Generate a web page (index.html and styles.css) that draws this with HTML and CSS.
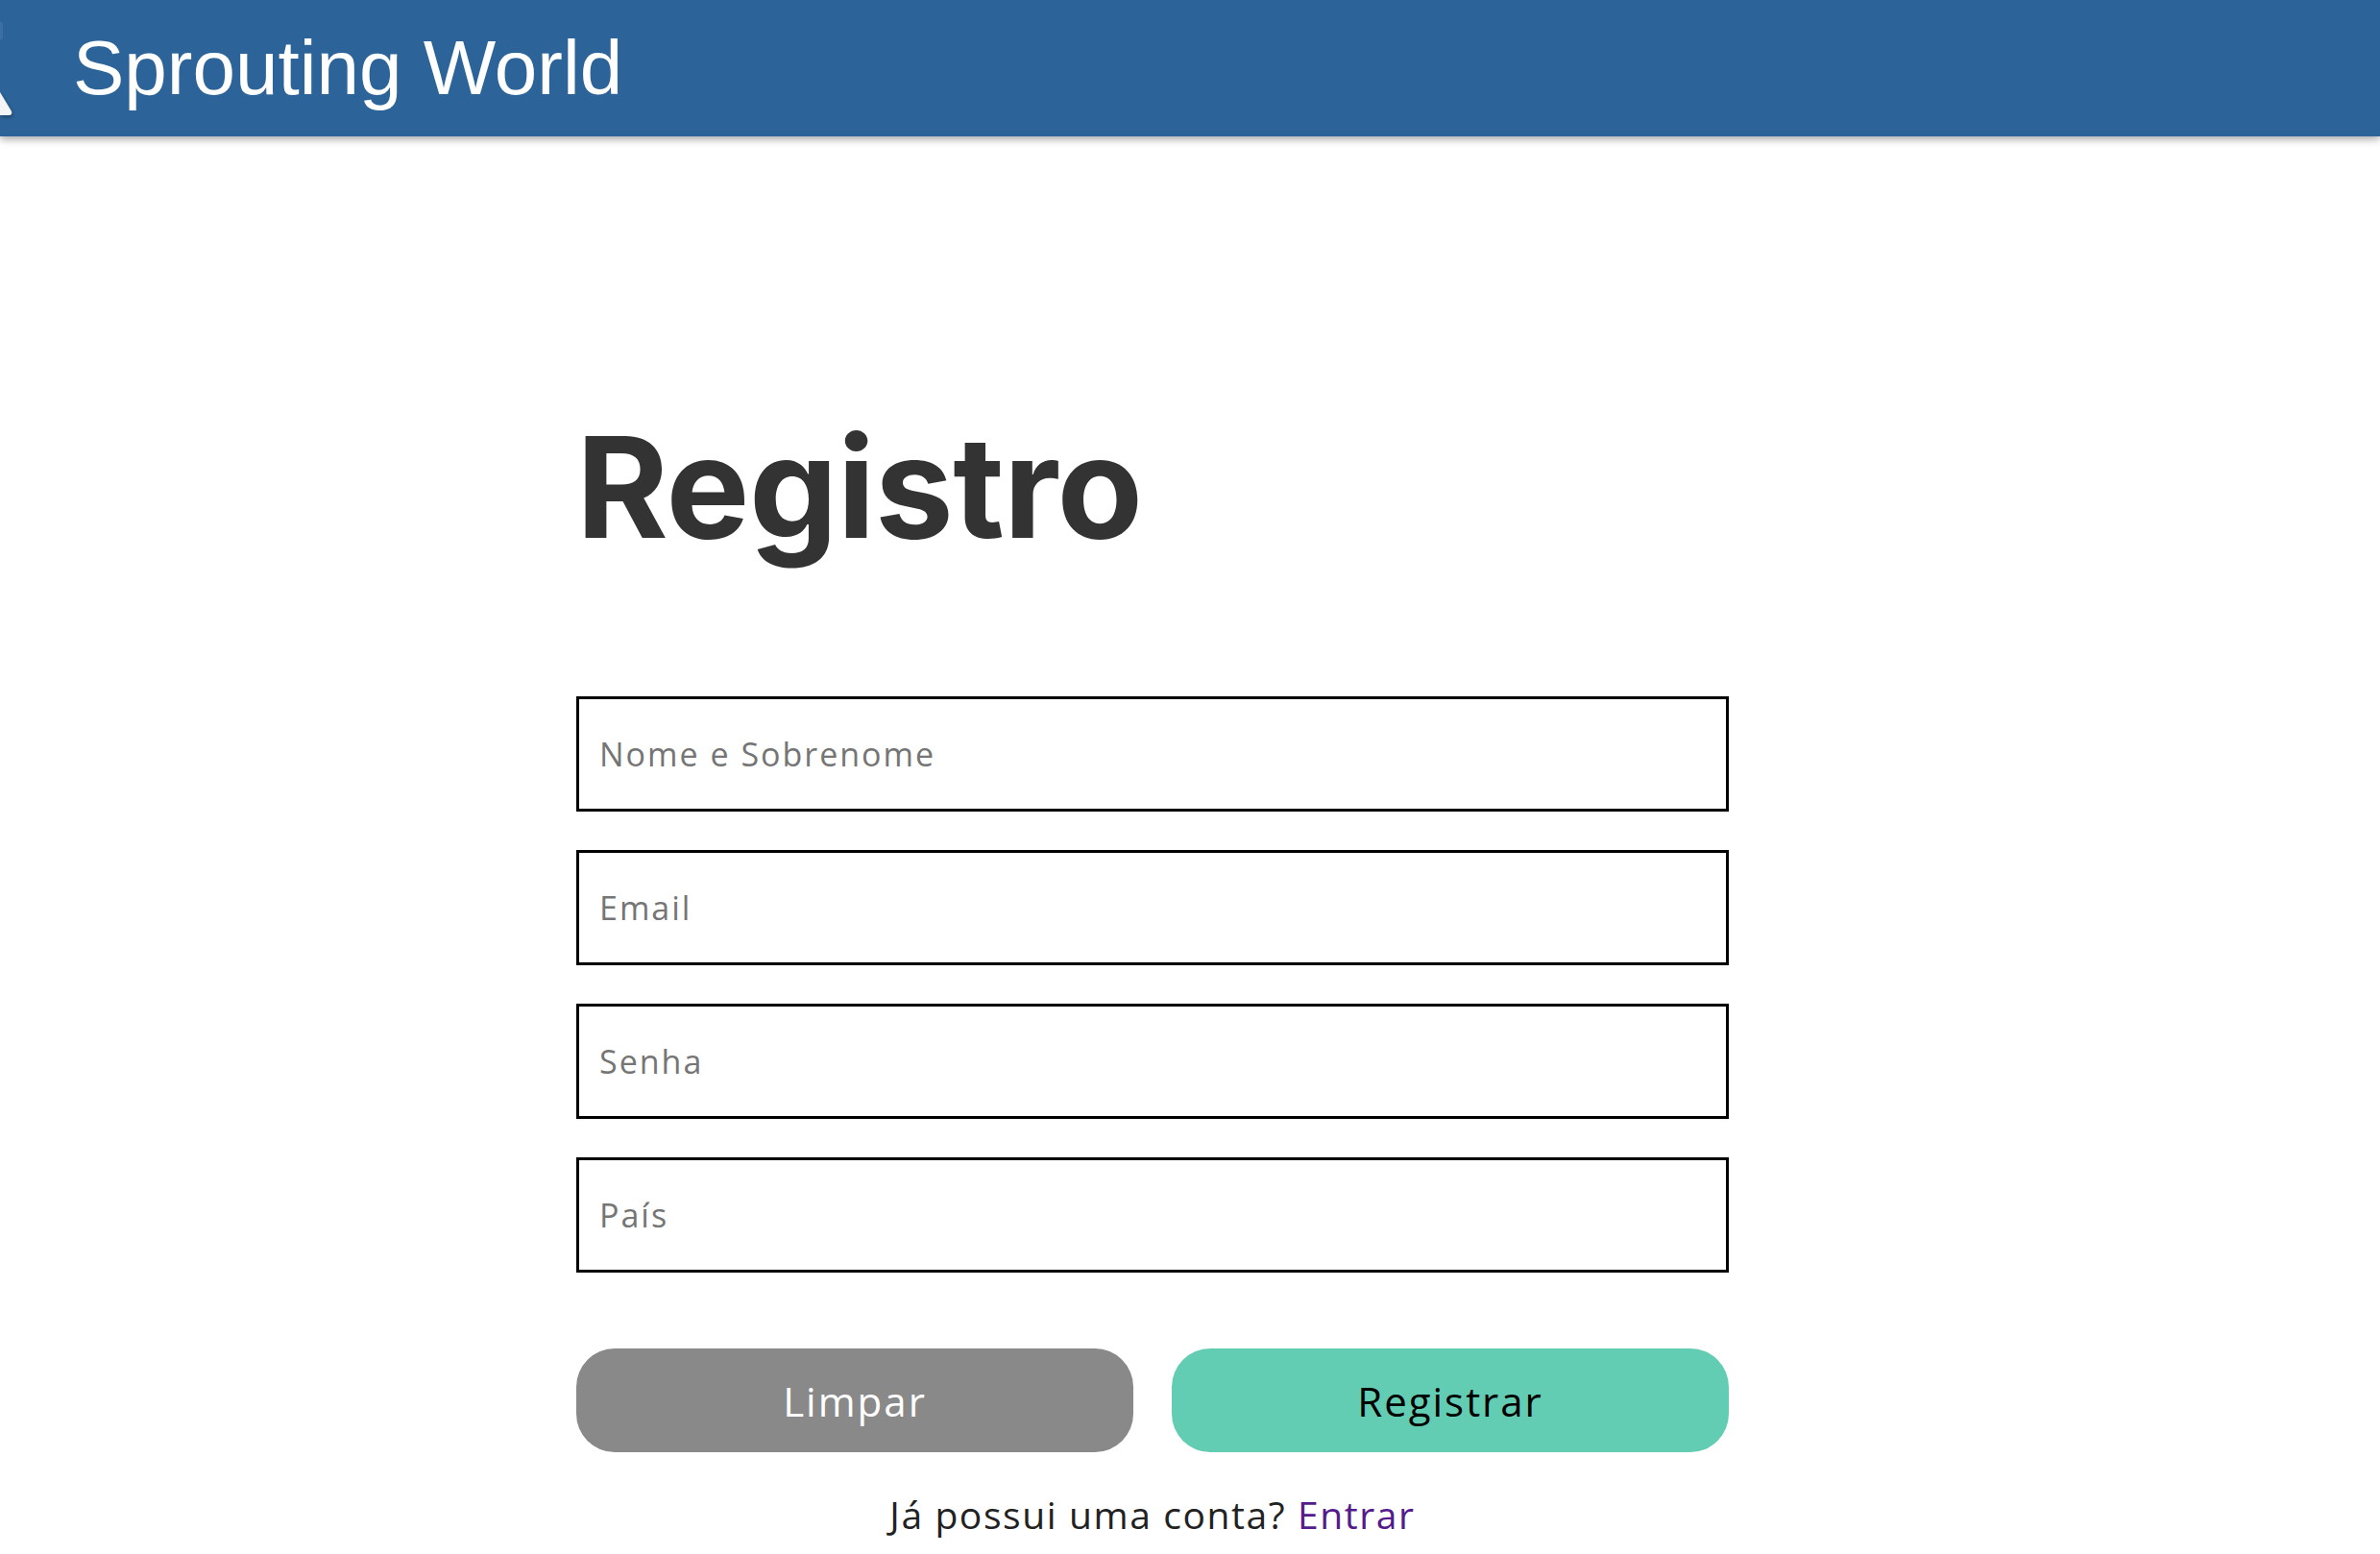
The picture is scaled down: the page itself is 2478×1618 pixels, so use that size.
FILE: index.html
```html
<!DOCTYPE html>
<html lang="pt-BR">
<head>
<meta charset="utf-8">
<title>Sprouting World - Registro</title>
<link rel="stylesheet" href="styles.css">
</head>
<body>
<header class="topbar">
  <svg class="logo" width="40" height="142" viewBox="0 0 40 142" aria-hidden="true">
    <defs>
      <filter id="sh" x="-50%" y="-50%" width="200%" height="200%">
        <feGaussianBlur in="SourceAlpha" stdDeviation="2"/>
        <feOffset dx="1" dy="2" result="b"/>
        <feComponentTransfer in="b" result="c"><feFuncA type="linear" slope="0.35"/></feComponentTransfer>
        <feMerge><feMergeNode in="c"/><feMergeNode in="SourceGraphic"/></feMerge>
      </filter>
    </defs>
    <path d="M0 22 L3 24 L3 40 L0 42 Z" fill="#3a6fa3"/>
    <path d="M0 96 L12 116 Q13 120 9 120 L0 120 Z" fill="#f4f4f6" filter="url(#sh)"/>
  </svg>
  <h1 class="brand">Sprouting World</h1>
</header>
<main class="page">
  <h2 class="title">Registro</h2>
  <form class="form">
    <input class="field" type="text" placeholder="Nome e Sobrenome">
    <input class="field" type="email" placeholder="Email">
    <input class="field" type="password" placeholder="Senha">
    <input class="field" type="text" placeholder="País">
    <div class="actions">
      <button type="reset" class="btn btn-clear">Limpar</button>
      <button type="submit" class="btn btn-submit">Registrar</button>
    </div>
  </form>
  <p class="login">Já possui uma conta? <a href="#" class="login-link">Entrar</a></p>
</main>
</body>
</html>
```

FILE: styles.css
```css
* { box-sizing: border-box; }

html, body {
  margin: 0;
  padding: 0;
  background: #ffffff;
}

body {
  width: 2478px;
  height: 1618px;
  overflow: hidden;
  font-family: "Open Sans", "Liberation Sans", sans-serif;
}

.topbar {
  position: relative;
  height: 142px;
  background: #2c6499;
  box-shadow: 0 3px 8px rgba(0, 0, 0, 0.35);
  display: flex;
  align-items: center;
  padding-left: 76px;
  z-index: 1;
}

.logo {
  position: absolute;
  left: 0;
  top: 0;
}

.brand {
  margin: 0;
  font-family: "Liberation Sans", Arial, sans-serif;
  font-weight: 400;
  font-size: 80px;
  line-height: 80px;
  color: #ffffff;
}

.page {
  width: 1200px;
  margin-left: 600px;
  padding-top: 292px;
}

.title {
  margin: 0 0 145px 0;
  font-family: "Inter", "Liberation Sans", sans-serif;
  font-weight: 700;
  font-size: 146px;
  line-height: 146px;
  color: #333333;
  letter-spacing: -0.5px;
}

.form {
  display: flex;
  flex-direction: column;
  gap: 40px;
}

.field {
  display: block;
  width: 100%;
  height: 120px;
  margin: 0;
  padding: 0 21px;
  border: 3px solid #000000;
  border-radius: 0;
  background: #ffffff;
  font-family: "Open Sans", sans-serif;
  font-size: 34px;
  letter-spacing: 2px;
  color: #222;
  outline: none;
}

.field::placeholder {
  color: #757575;
  opacity: 1;
}

.actions {
  display: flex;
  gap: 40px;
  margin-top: 39px;
}

.btn {
  flex: 1;
  height: 108px;
  border: none;
  border-radius: 40px;
  font-family: "Open Sans", sans-serif;
  font-size: 42px;
  letter-spacing: 2px;
  cursor: pointer;
  padding: 0;
}

.btn-clear {
  background: #898989;
  color: #ffffff;
}

.btn-submit {
  background: #62cdb2;
  color: #000000;
}

.login {
  margin: 41px 0 0 0;
  text-align: center;
  font-family: "Open Sans", sans-serif;
  font-size: 39px;
  line-height: 47px;
  letter-spacing: 1.6px;
  color: #222222;
}

.login-link {
  color: #551a8b;
  text-decoration: none;
}
```
